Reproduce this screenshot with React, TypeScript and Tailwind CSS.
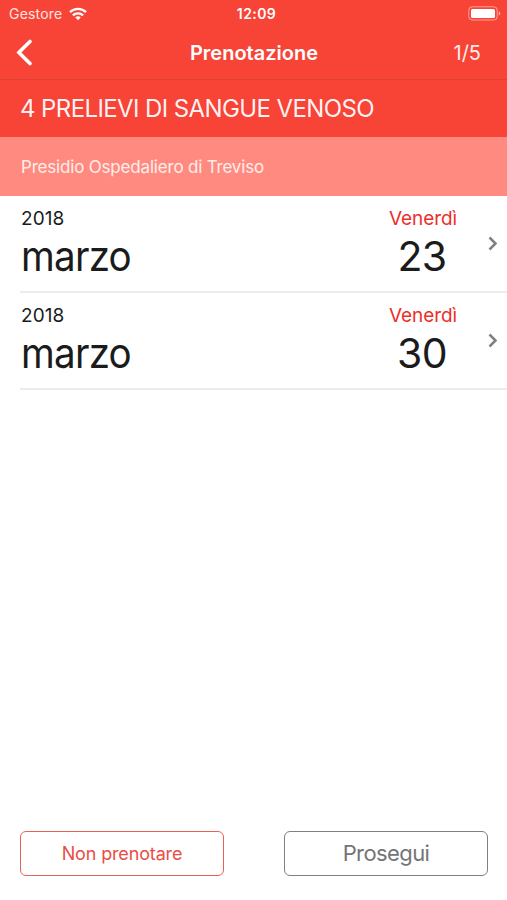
const appointments = [
  { year: '2018', month: 'marzo', weekday: 'Venerdì', day: '23' },
  { year: '2018', month: 'marzo', weekday: 'Venerdì', day: '30' },
];

function StatusBar() {
  return (
    <div className="grid h-[27px] grid-cols-3 items-center pr-[6px] pl-[9px] text-[14px] leading-none">
      <div className="flex items-center gap-[7px]">
        <span className="tracking-[0.2px] text-white/85">Gestore</span>
        <svg width="18" height="14" viewBox="0 0 18 14" fill="none" stroke="white" strokeWidth="2.3">
          <path d="M1 5.2a11.5 11.5 0 0 1 16 0" />
          <path d="M3.9 8.4a7.3 7.3 0 0 1 10.2 0" />
          <path d="M9 13.2 6.3 10.5a3.9 3.9 0 0 1 5.4 0Z" fill="white" stroke="none" />
        </svg>
      </div>
      <span className="pl-[3px] text-center font-semibold tracking-[0.4px]">12:09</span>
      <svg className="justify-self-end" width="33" height="15" viewBox="0 0 33 15">
        <rect x="0.8" y="0.8" width="28.4" height="13.2" rx="3.4" fill="none" stroke="white" strokeOpacity="0.5" />
        <rect x="3" y="3" width="24" height="9" rx="1.5" fill="white" />
        <path d="M30.8 5.2v4.4a2.4 2.4 0 0 0 0-4.4Z" fill="white" fillOpacity="0.6" />
      </svg>
    </div>
  );
}

export default function App() {
  return (
    <div className="flex h-[900px] w-[507px] flex-col overflow-hidden bg-white font-['Inter',sans-serif] text-[#1b1b1b]">
      <header className="h-[79px] bg-[#f74437] text-white">
        <StatusBar />
        <div className="grid h-[52px] grid-cols-[1fr_auto_1fr] items-center pr-[26px] pl-[16px]">
          <svg width="18" height="28" viewBox="0 0 18 28" fill="none" stroke="white" strokeWidth="3.6" strokeLinecap="round">
            <path d="M14 2.5 2.9 13.5 14 24.5" />
          </svg>
          <h1 className="pl-[11px] text-[20px] leading-none font-semibold">Prenotazione</h1>
          <span className="justify-self-end text-[20px] leading-none text-white/90">1/5</span>
        </div>
      </header>
      <section className="flex h-[58px] items-center border-t border-[#e14034] bg-[#f74437] pl-[20px] text-white">
        <h2 className="text-[24px] leading-none tracking-[-0.6px] whitespace-nowrap text-white/95">4 PRELIEVI DI SANGUE VENOSO</h2>
      </section>
      <section className="flex h-[59px] items-center bg-[#ff8a80] pt-[2px] pl-[21px]">
        <p className="text-[17px] leading-none tracking-[-0.19px] whitespace-nowrap text-white/85">Presidio Ospedaliero di Treviso</p>
      </section>
      <ul className="flex-1">
        {appointments.map((item) => (
          <li key={item.day} className="ml-[20px] flex h-[96.75px] border-b-2 border-[#ececec]">
            <div className="flex-1 pt-[13px] pl-[1px]">
              <p className="text-[19px] leading-[20px] tracking-[0.1px]">{item.year}</p>
              <p className="mt-[3px] origin-left scale-x-[0.94] text-[41px] leading-[49px] tracking-[-0.8px]">{item.month}</p>
            </div>
            <div className="w-[90px] pt-[13px] text-center">
              <p className="pl-[2px] text-[19px] leading-[20px] tracking-[-0.1px] text-[#ed2f2b]">{item.weekday}</p>
              <p className="mt-[3px] text-[41px] leading-[49px] tracking-[-0.6px]">{item.day}</p>
            </div>
            <div className="flex w-[40px] items-center justify-end pt-[1px] pr-[7px]">
              <svg width="13" height="17" viewBox="0 0 13 17" fill="none" stroke="#808080" strokeWidth="2.5">
                <path d="m2.5 2.5 6 6-6 6" />
              </svg>
            </div>
          </li>
        ))}
      </ul>
      <footer className="flex justify-between pr-[19px] pb-[24px] pl-[20px]">
        <button className="h-[45px] w-[204px] rounded-[6px] border border-[#ec5f57] text-[18px] tracking-[-0.15px] text-[#ea4d45]">Non prenotare</button>
        <button className="h-[45px] w-[204px] rounded-[6px] border border-[#808080] text-[22px] tracking-[-0.6px] text-[#757575]">Prosegui</button>
      </footer>
    </div>
  );
}
